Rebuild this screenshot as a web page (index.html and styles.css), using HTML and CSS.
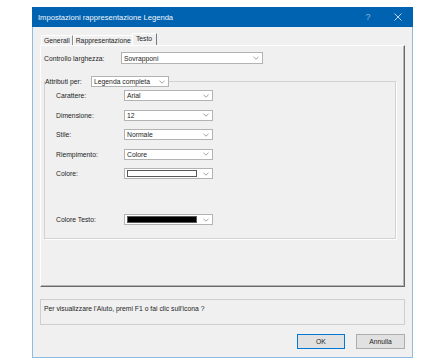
FILE: index.html
```html
<!DOCTYPE html>
<html lang="it">
<head>
  <meta charset="UTF-8">
  <title>Impostazioni rappresentazione Legenda</title>
  <link rel="stylesheet" href="styles.css">
</head>
<body>
  <div class="window">
    <div class="titlebar">
      <span class="title">Impostazioni rappresentazione Legenda</span>
      <span class="caption-btn">?</span>
      <span class="caption-btn">
        <svg width="8" height="8" viewBox="0 0 8 8"><path d="M0.5 0.5 L7.5 7.5 M7.5 0.5 L0.5 7.5" stroke="#b9d3ec" stroke-width="1" fill="none"/></svg>
      </span>
    </div>

    <div class="dialog">
      <div class="tabs">
        <div class="tab">Generali</div>
        <div class="tab">Rappresentazione</div>
        <div class="tab active">Testo</div>
      </div>

      <div class="panel">
        <div class="field-row">
          <span class="label wide-label">Controllo larghezza:</span>
          <div class="combo combo-wide">
            <span class="combo-text">Sovrapponi</span>
            <svg class="chevron" width="6" height="4" viewBox="0 0 6 4"><path d="M0.5 0.8 L3 3.2 L5.5 0.8" stroke="#8a8a8a" stroke-width="0.8" fill="none"/></svg>
          </div>
        </div>

        <fieldset class="group">
          <legend class="group-legend">
            <span class="legend-label">Attributi per:</span>
            <div class="combo combo-legend">
              <span class="combo-text">Legenda completa</span>
              <svg class="chevron" width="6" height="4" viewBox="0 0 6 4"><path d="M0.5 0.8 L3 3.2 L5.5 0.8" stroke="#8a8a8a" stroke-width="0.8" fill="none"/></svg>
            </div>
          </legend>

          <div class="group-rows">
            <div class="attr-row">
              <span class="label">Carattere:</span>
              <div class="combo">
                <span class="combo-text">Arial</span>
                <svg class="chevron" width="6" height="4" viewBox="0 0 6 4"><path d="M0.5 0.8 L3 3.2 L5.5 0.8" stroke="#8a8a8a" stroke-width="0.8" fill="none"/></svg>
              </div>
            </div>
            <div class="attr-row">
              <span class="label">Dimensione:</span>
              <div class="combo">
                <span class="combo-text">12</span>
                <svg class="chevron" width="6" height="4" viewBox="0 0 6 4"><path d="M0.5 0.8 L3 3.2 L5.5 0.8" stroke="#8a8a8a" stroke-width="0.8" fill="none"/></svg>
              </div>
            </div>
            <div class="attr-row">
              <span class="label">Stile:</span>
              <div class="combo">
                <span class="combo-text">Normale</span>
                <svg class="chevron" width="6" height="4" viewBox="0 0 6 4"><path d="M0.5 0.8 L3 3.2 L5.5 0.8" stroke="#8a8a8a" stroke-width="0.8" fill="none"/></svg>
              </div>
            </div>
            <div class="attr-row">
              <span class="label">Riempimento:</span>
              <div class="combo">
                <span class="combo-text">Colore</span>
                <svg class="chevron" width="6" height="4" viewBox="0 0 6 4"><path d="M0.5 0.8 L3 3.2 L5.5 0.8" stroke="#8a8a8a" stroke-width="0.8" fill="none"/></svg>
              </div>
            </div>
            <div class="attr-row">
              <span class="label">Colore:</span>
              <div class="combo">
                <span class="swatch swatch-white"></span>
                <svg class="chevron" width="6" height="4" viewBox="0 0 6 4"><path d="M0.5 0.8 L3 3.2 L5.5 0.8" stroke="#8a8a8a" stroke-width="0.8" fill="none"/></svg>
              </div>
            </div>
            <div class="attr-row text-color-row">
              <span class="label">Colore Testo:</span>
              <div class="combo">
                <span class="swatch swatch-black"></span>
                <svg class="chevron" width="6" height="4" viewBox="0 0 6 4"><path d="M0.5 0.8 L3 3.2 L5.5 0.8" stroke="#8a8a8a" stroke-width="0.8" fill="none"/></svg>
              </div>
            </div>
          </div>
        </fieldset>
      </div>

      <div class="status">Per visualizzare l'Aiuto, premi F1 o fai clic sull'icona ?</div>

      <div class="buttons">
        <button class="btn btn-default">OK</button>
        <button class="btn">Annulla</button>
      </div>
    </div>
  </div>
</body>
</html>
```

FILE: styles.css
```css
* {
  margin: 0;
  padding: 0;
  box-sizing: border-box;
}

body {
  width: 432px;
  height: 364px;
  background: #ffffff;
  font-family: "Liberation Sans", Arial, sans-serif;
  font-size: 6.8px;
  color: #1e1e1e;
  overflow: hidden;
}

.window {
  margin: 7px 0 0 32px;
  width: 381px;
  height: 351px;
  background: #f0f0f0;
  border: 1px solid #8fbbe2;
  border-top: none;
}

.titlebar {
  display: flex;
  align-items: center;
  height: 20px;
  margin: 0 -1px;
  padding-left: 6px;
  background: #0063b1;
  color: #f2f6fb;
}

.title {
  flex: 1;
  font-size: 7.6px;
}

.caption-btn {
  display: flex;
  align-items: center;
  justify-content: center;
  width: 30px;
  height: 20px;
  color: #8fb6dc;
  font-size: 9px;
}

.dialog {
  padding: 6px 7px 0;
}

.tabs {
  display: flex;
  align-items: flex-end;
  height: 12px;
  padding-left: 1px;
}

.tab {
  height: 10px;
  line-height: 9px;
  padding: 0 2px;
  border-top: 1px solid #ffffff;
  border-left: 1px solid #ffffff;
  border-right: 1px solid #8c8c8c;
  white-space: nowrap;
}

.tab.active {
  height: 12px;
  line-height: 10px;
  padding: 0 4px 0 3px;
  margin-left: -2px;
  background: #f0f0f0;
  border-right-color: #7a7a7a;
}

.panel {
  height: 242px;
  padding: 6px 0 0 3px;
  border-top: 1px solid #ffffff;
  border-left: 1px solid #ffffff;
  border-right: 1px solid #6a6a6a;
  border-bottom: 1px solid #6a6a6a;
  box-shadow: inset -1px -1px 0 #b4b4b4;
}

.field-row,
.attr-row {
  display: flex;
  align-items: center;
}

.label {
  width: 68px;
  white-space: nowrap;
}

.wide-label {
  width: 77px;
}

.combo {
  display: flex;
  align-items: center;
  width: 89px;
  height: 11px;
  padding: 0 3px 0 2px;
  background: #ffffff;
  border: 1px solid #b3b3b3;
}

.combo-wide {
  width: 142px;
  height: 12px;
}

.combo-legend {
  width: 78px;
}

.combo-text {
  flex: 1;
  white-space: nowrap;
}

.chevron {
  flex: none;
}

.swatch {
  flex: 1;
  height: 7px;
  margin-right: 6px;
  border: 1px solid #5a5a5a;
}

.swatch-white {
  background: #ffffff;
}

.swatch-black {
  background: #000000;
}

.group {
  width: 352px;
  margin-top: 12px;
  padding: 0;
  border: 1px solid #d2d2d2;
  box-shadow: 1px 1px 0 #ffffff;
}

.group-legend {
  display: flex;
  align-items: center;
  padding: 0;
}

.legend-label {
  width: 46px;
  white-space: nowrap;
}

.group-rows {
  display: flex;
  flex-direction: column;
  gap: 8.6px;
  padding: 3px 0 13px 11px;
}

.text-color-row {
  margin-top: 26.5px;
}

.status {
  height: 26px;
  margin-top: 12px;
  padding: 5px 3px;
  border: 1px solid #cfcfcf;
}

.buttons {
  display: flex;
  justify-content: flex-end;
  gap: 11px;
  margin-top: 9px;
}

.btn {
  width: 49px;
  height: 15px;
  font-family: "Liberation Sans", Arial, sans-serif;
  font-size: 6.8px;
  color: #1e1e1e;
  background: #e1e1e1;
  border: 1px solid #adadad;
}

.btn-default {
  width: 48px;
  border-color: #0078d7;
}
```
